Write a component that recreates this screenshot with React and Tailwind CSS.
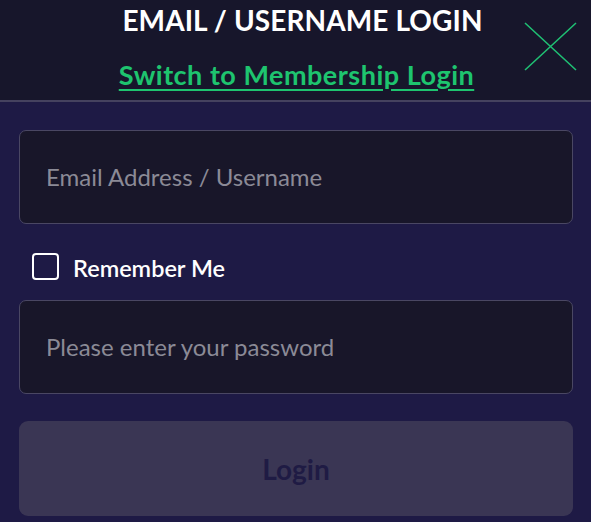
import React from "react";

export default function App() {
  return (
    <div className="w-[591px] h-[522px] overflow-hidden bg-[#1e1a45] font-['Lato',sans-serif]">
      <div className="relative h-[102px] bg-[#17162b] border-b-2 border-[#45425f] flex flex-col items-center">
        <div className="mt-[3px] ml-[14px] text-white font-bold text-[28px] leading-[34px] tracking-[0.1px]">
          EMAIL / USERNAME LOGIN
        </div>
        <a className="mt-[22px] ml-[2px] text-[#1ec46f] font-bold text-[27px] leading-[32px] tracking-[0.5px] underline decoration-2 underline-offset-[4px]">
          Switch to Membership Login
        </a>
        <svg className="absolute left-[522px] top-[20px]" width="56" height="52" viewBox="0 0 56 52">
          <path d="M3 3 L54 50 M54 3 L3 50" stroke="#1fbf73" strokeWidth="1.6" fill="none" />
        </svg>
      </div>
      <div className="pl-[19px] pt-[28px] flex flex-col w-[573px]">
        <div className="h-[94px] rounded-[7px] border border-[#4a4763] bg-[#181629] flex items-center px-[26px]">
          <span className="text-[#8b8a96] text-[24px]">Email Address / Username</span>
        </div>
        <div className="flex items-center h-[76px] pl-[13px] pt-[8px]">
          <div className="w-[27px] h-[27px] rounded-[4px] border-2 border-white" />
          <span className="ml-[14px] text-white font-semibold text-[23.5px] leading-[30px] mt-[4px]">Remember Me</span>
        </div>
        <div className="h-[94px] rounded-[7px] border border-[#4a4763] bg-[#181629] flex items-center px-[26px]">
          <span className="text-[#8b8a96] text-[24px]">Please enter your password</span>
        </div>
        <div className="mt-[27px] h-[95px] rounded-[9px] bg-[#3a3654] flex items-center justify-center">
          <span className="text-[#1f1b44] font-bold text-[28px]">Login</span>
        </div>
      </div>
    </div>
  );
}
